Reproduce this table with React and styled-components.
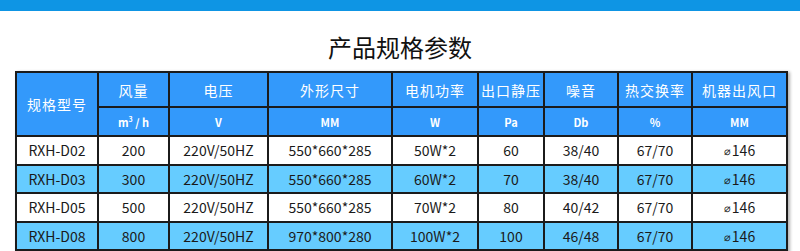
import React from 'react';
import styled, { createGlobalStyle } from 'styled-components';

const GlobalStyle = createGlobalStyle`
  html, body {
    margin: 0;
    padding: 0;
    background: #ffffff;
    font-family: "Noto Sans CJK SC", "Liberation Sans", sans-serif;
  }
`;

const Page = styled.div`
  width: 800px;
  height: 251px;
  overflow: hidden;
  display: flex;
  flex-direction: column;

  & > * {
    flex-shrink: 0;
  }
`;

const TopBar = styled.div`
  height: 11px;
  background-color: #0e95e4;
`;

const Title = styled.h1`
  margin: 24px 0 12px;
  height: 24px;
  line-height: 24px;
  font-size: 24px;
  font-weight: normal;
  color: #111;
  text-align: center;
`;

const Table = styled.table`
  width: 771px;
  margin-left: 15px;
  border-collapse: collapse;
  table-layout: fixed;
  border: 2px solid #1b1b1b;
  box-shadow: 2px 1px 3px rgba(0, 0, 0, 0.3);
`;

const HeadCell = styled.th`
  background-color: #3399fb;
  color: #ffffff;
  border: 2px solid #1b1b1b;
  padding: 0;
  text-align: center;
  font-size: ${(p) => (p.$unit ? '11px' : '14px')};
  font-weight: ${(p) => (p.$unit ? 'bold' : 'normal')};
  letter-spacing: ${(p) => (p.$unit ? '0' : '1px')};
  height: ${(p) => (p.$unit ? '27px' : '33px')};
`;

const Row = styled.tr`
  background-color: ${(p) => (p.$alt ? '#66ccff' : '#ffffff')};
`;

const Cell = styled.td`
  border: 2px solid #1b1b1b;
  padding: 0;
  height: 26.5px;
  text-align: center;
  font-size: 14px;
  color: #1a1a1a;
`;

const Dia = styled.span`
  font-size: 11px;
  margin-right: 1px;
  vertical-align: 1px;
`;

const Sup = styled.sup`
  font-size: 7px;
`;

const widths = [82, 71, 99, 124, 86, 66, 74, 74, 95];

const columns = [
  { name: '风量', unit: <>m<Sup>3</Sup> / h</> },
  { name: '电压', unit: 'V' },
  { name: '外形尺寸', unit: 'MM' },
  { name: '电机功率', unit: 'W' },
  { name: '出口静压', unit: 'Pa' },
  { name: '噪音', unit: 'Db' },
  { name: '热交换率', unit: '%' },
  { name: '机器出风口', unit: 'MM' },
];

const rows = [
  ['RXH-D02', '200', '220V/50HZ', '550*660*285', '50W*2', '60', '38/40', '67/70', '146'],
  ['RXH-D03', '300', '220V/50HZ', '550*660*285', '60W*2', '70', '38/40', '67/70', '146'],
  ['RXH-D05', '500', '220V/50HZ', '550*660*285', '70W*2', '80', '40/42', '67/70', '146'],
  ['RXH-D08', '800', '220V/50HZ', '970*800*280', '100W*2', '100', '46/48', '67/70', '146'],
];

const App = () => {
  return (
    <Page>
      <GlobalStyle />
      <TopBar />
      <Title>产品规格参数</Title>
      <Table>
        <colgroup>
          {widths.map((w, i) => (
            <col key={i} style={{ width: w }} />
          ))}
        </colgroup>
        <thead>
          <tr>
            <HeadCell rowSpan={2}>规格型号</HeadCell>
            {columns.map((c) => (
              <HeadCell key={c.name}>{c.name}</HeadCell>
            ))}
          </tr>
          <tr>
            {columns.map((c) => (
              <HeadCell key={c.name} $unit>
                {c.unit}
              </HeadCell>
            ))}
          </tr>
        </thead>
        <tbody>
          {rows.map((r, i) => (
            <Row key={r[0]} $alt={i % 2 === 1}>
              {r.map((v, j) => (
                <Cell key={j}>
                  {j === 8 && <Dia>⌀</Dia>}
                  {v}
                </Cell>
              ))}
            </Row>
          ))}
          {/* next row continues below the fold */}
          <Row>
            {widths.map((w, j) => (
              <Cell key={j} />
            ))}
          </Row>
        </tbody>
      </Table>
    </Page>
  );
};

export default App;
